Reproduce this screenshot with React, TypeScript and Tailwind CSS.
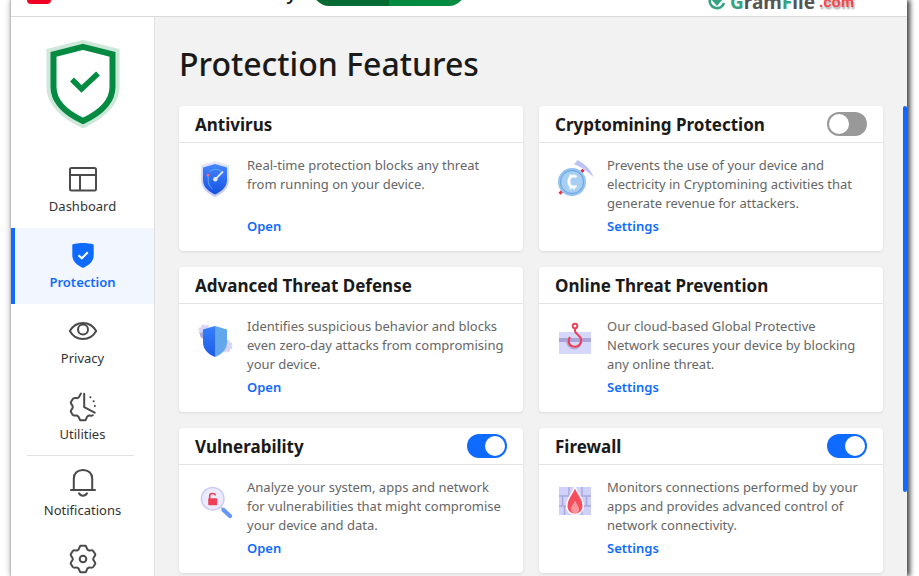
import { useState } from 'react';
import type { ReactNode } from 'react';
import clsx from 'clsx';

const navItems = [
  { id: 'dashboard', label: 'Dashboard', icon: <DashboardIcon /> },
  { id: 'protection', label: 'Protection', icon: <ProtectionIcon /> },
  { id: 'privacy', label: 'Privacy', icon: <PrivacyIcon /> },
  { id: 'utilities', label: 'Utilities', icon: <UtilitiesIcon /> },
  { id: 'notifications', label: 'Notifications', icon: <BellIcon />, divider: true },
  { id: 'settings', label: 'Settings', icon: <SettingsIcon /> },
];

type Feature = {
  id: string;
  title: string;
  description: string;
  action: string;
  icon: ReactNode;
  enabled?: boolean;
};

const features: Feature[] = [
  {
    id: 'antivirus',
    title: 'Antivirus',
    description: 'Real-time protection blocks any threat from running on your device.',
    action: 'Open',
    icon: <AntivirusArt />,
  },
  {
    id: 'cryptomining',
    title: 'Cryptomining Protection',
    description:
      'Prevents the use of your device and electricity in Cryptomining activities that generate revenue for attackers.',
    action: 'Settings',
    icon: <CryptoArt />,
    enabled: false,
  },
  {
    id: 'threat-defense',
    title: 'Advanced Threat Defense',
    description:
      'Identifies suspicious behavior and blocks even zero-day attacks from compromising your device.',
    action: 'Open',
    icon: <DefenseArt />,
  },
  {
    id: 'online-threat',
    title: 'Online Threat Prevention',
    description:
      'Our cloud-based Global Protective Network secures your device by blocking any online threat.',
    action: 'Settings',
    icon: <HookArt />,
  },
  {
    id: 'vulnerability',
    title: 'Vulnerability',
    description:
      'Analyze your system, apps and network for vulnerabilities that might compromise your device and data.',
    action: 'Open',
    icon: <VulnerabilityArt />,
    enabled: true,
  },
  {
    id: 'firewall',
    title: 'Firewall',
    description:
      'Monitors connections performed by your apps and provides advanced control of network connectivity.',
    action: 'Settings',
    icon: <FirewallArt />,
    enabled: true,
  },
];

export default function App() {
  const [active, setActive] = useState('protection');

  return (
    <div className="h-screen overflow-hidden bg-white pl-2.5 pr-3 font-['Noto_Sans','Open_Sans',sans-serif] text-[#1a1a1a]">
      <div className="flex h-full flex-col border-l border-[#bfbfbf] bg-white shadow-[3px_0_5px_rgba(0,0,0,0.7),0_0_7px_rgba(0,0,0,0.2)]">
        <Header />

        <div className="flex min-h-0 flex-1">
          {/* Sidebar */}
          <aside className="w-36 shrink-0 overflow-hidden border-r border-[#e0e0e0] bg-white">
            <div className="flex justify-center pt-[23px] pb-6">
              <StatusShield />
            </div>
            <nav>
              {navItems.map((item) => (
                <div key={item.id}>
                  {item.divider && <hr className="-mt-px mr-5 ml-4 border-[#e0e0e0]" />}
                  <button
                    type="button"
                    onClick={() => setActive(item.id)}
                    className={clsx(
                      'flex w-full flex-col items-center border-l-4 pt-3 pr-1 pb-3 text-[13px] leading-5',
                      active === item.id
                        ? 'border-[#0f6bff] bg-[#f2f7ff] font-semibold text-[#0f6bff]'
                        : 'border-transparent text-[#333]'
                    )}
                  >
                    {item.icon}
                    <span className="mt-0.5">{item.label}</span>
                  </button>
                </div>
              ))}
            </nav>
          </aside>

          {/* Main content */}
          <main className="min-w-0 flex-1 overflow-hidden bg-[#f2f2f2] pt-[23px] pl-6">
            <h1 className="mb-[18px] text-[32px] leading-12 font-medium">Protection Features</h1>
            <div className="flex items-start">
              <div className="grid flex-1 grid-cols-2 gap-4 pr-5">
                {features.map((feature) => (
                  <FeatureCard key={feature.id} feature={feature} />
                ))}
              </div>
              <div className="h-[67vh] w-1 rounded-full bg-[#0f6bff]" />
            </div>
          </main>
        </div>
      </div>
    </div>
  );
}

function Header() {
  return (
    <header className="flex h-[17px] shrink-0 items-end overflow-hidden border-b border-[#d9d9d9] pr-[53px] pl-4">
      <div className="mb-3 h-6 w-6 shrink-0 rounded bg-[#f00022]" />
      <span className="mb-2.5 ml-2 flex w-[254px] shrink-0 justify-end pr-4 text-xl leading-7 font-medium whitespace-nowrap">
        Bitdefender Total Security
      </span>
      <div className="mb-2.5 flex h-8 w-[152px] shrink-0 overflow-hidden rounded-full">
        <div className="flex-1 bg-[#056b32]" />
        <div className="flex-1 bg-[#058a42]" />
      </div>
      <div className="ml-auto flex shrink-0 items-end">
        <svg className="mr-1 mb-1.5 h-[18px] w-[18px]" viewBox="0 0 18 18" fill="none">
          <path d="M11 1.8A7.3 7.3 0 1 0 16 11" stroke="#36a283" strokeWidth="2.6" />
          <path d="M9 14L3.8 8h3V3h4.4v5h3z" fill="#36a283" />
        </svg>
        <span className="mb-1 text-[19px] leading-5 font-bold text-[#555]">
          <span className="text-[#36a283]">G</span>ram<span className="text-[#36a283]">F</span>ile
        </span>
        <span className="mb-1 ml-1 font-['Liberation_Sans',sans-serif] text-[15px] leading-5 font-bold text-[#f5474c] [text-shadow:1px_2px_2px_#999]">
          .com
        </span>
      </div>
    </header>
  );
}

function FeatureCard({ feature }: { feature: Feature }) {
  const [enabled, setEnabled] = useState(feature.enabled ?? false);

  return (
    <section className="rounded bg-white shadow-[0_1px_3px_rgba(0,0,0,0.1)]">
      <div className="flex h-[37px] items-center justify-between border-b border-[#e3e3e3] px-4">
        <h2 id={feature.id} className="pt-0.5 text-[17px] leading-6 font-bold">
          {feature.title}
        </h2>
        {feature.enabled !== undefined && (
          <input
            type="checkbox"
            role="switch"
            aria-labelledby={feature.id}
            checked={enabled}
            onChange={(e) => setEnabled(e.target.checked)}
            className="h-6 w-10 cursor-pointer appearance-none rounded-full bg-[#999] p-0.5 before:block before:h-5 before:w-5 before:rounded-full before:bg-white checked:bg-[#0f6bff] checked:before:ml-4"
          />
        )}
      </div>
      <div className="flex gap-3 px-4 pt-[13px] pb-[15px]">
        <div className="mt-1 h-10 w-10 shrink-0">{feature.icon}</div>
        <div className="flex flex-col items-start text-[13px] leading-[19px]">
          <p className="min-h-[57px] text-[#666]">{feature.description}</p>
          <a href={`#${feature.id}`} className="mt-1 font-semibold text-[#0f6bff]">
            {feature.action}
          </a>
        </div>
      </div>
    </section>
  );
}

/* Sidebar icons */

function StatusShield() {
  return (
    <svg className="h-[88px] w-[74px]" viewBox="0 0 74 88" fill="none">
      <path d="M37 0L73.500 9V47C73.500 65 58 78.500 37 88.500C16 78.500 0.500 65 0.500 47V9Z" fill="#cde8d9" />
      <path d="M37 6.800L66.500 14.300V47C66.500 61.500 54 73 37 81C20 73 7.500 61.500 7.500 47V14.300Z" fill="#fff" stroke="#058a42" strokeWidth="6" />
      <path d="M26 39.500L35.500 49L52 33.500" stroke="#058a42" strokeWidth="5.500" />
    </svg>
  );
}

function DashboardIcon() {
  return (
    <svg className="h-[30px] w-[30px]" viewBox="0 0 30 30" fill="none" stroke="#4a4a4a" strokeWidth="2">
      <rect x="2" y="4" width="26" height="22.500" rx="1.500" />
      <path d="M2 11H28M12 11V26.500" />
    </svg>
  );
}

function ProtectionIcon() {
  return (
    <svg className="h-[30px] w-[30px]" viewBox="0 0 30 30" fill="none">
      <path d="M15 3C18.500 3 22.500 3.500 25.700 4.500V15C25.700 21 21.500 25 15 28C8.500 25 4.300 21 4.300 15V4.500C7.500 3.500 11.500 3 15 3Z" fill="#0f6bff" />
      <path d="M10.500 15.200L13.800 18.300L19.800 12.300" stroke="#fff" strokeWidth="2" />
    </svg>
  );
}

function PrivacyIcon() {
  return (
    <svg className="h-[30px] w-[30px]" viewBox="0 0 30 30" fill="none" stroke="#4a4a4a" strokeWidth="2">
      <path d="M1.800 14.900C5 9.500 9.500 6.900 15 6.900S25 9.500 28.200 14.900C25 20.500 20.500 23 15 23S5 20.500 1.800 14.900Z" strokeLinejoin="round" />
      <circle cx="15" cy="13.500" r="5" />
    </svg>
  );
}

function UtilitiesIcon() {
  return (
    <svg className="h-[30px] w-[30px]" viewBox="0 0 30 30" fill="none" stroke="#4a4a4a" strokeWidth="2" strokeLinejoin="round" strokeLinecap="round">
      <path d="M13 1.500C11.600 2.500 12 5.800 9.300 6.200C6.500 6 5.500 5.500 4.800 7L2.800 10.300C2.500 12 4.800 13 4.800 15S2.500 18 2.800 19.700L4.800 23C5.800 24.300 7.500 23 9.500 23.800C11.500 25 11 26.500 12.200 28.200H17.500C18.800 26.500 18 25 20.200 23.800C22 23.200 23.500 24.200 24.800 23.200" />
      <path d="M16.200 1.700V15.200L26.700 20.700" />
      <path d="M22.300 5.200H22.400M25.600 9.200H25.700M26.800 14.100H26.900" />
    </svg>
  );
}

function BellIcon() {
  return (
    <svg className="h-[30px] w-[30px]" viewBox="0 0 30 30" fill="none" stroke="#4a4a4a" strokeWidth="2" strokeLinecap="round">
      <path d="M3 22H27M5.800 21.500V10.500C5.800 5.500 9.500 1.900 15 1.900S24.200 5.500 24.200 10.500V21.500" />
      <path d="M11 25.300C12.500 28.400 17.500 28.400 19 25.300" />
    </svg>
  );
}

function SettingsIcon() {
  return (
    <svg className="h-[30px] w-[30px]" viewBox="0 0 30 30" fill="none" stroke="#4a4a4a" strokeWidth="2" strokeLinejoin="round">
      <path d="M12.300 1.800H17.700C19 3.500 18.500 5.500 20.500 6.200C22.500 7 24 5.500 25.200 7L27.300 10.300C27.600 12 25.200 13 25.200 15S27.600 18 27.300 19.700L25.200 23C24 24.500 22.500 23 20.500 23.800C18.500 24.500 19 26.500 17.700 28.200H12.300C11 26.500 11.500 24.500 9.500 23.800C7.500 23 6 24.500 4.800 23L2.700 19.700C2.400 18 4.800 17 4.800 15S2.400 12 2.700 10.300L4.800 7C6 5.500 7.500 7 9.500 6.200C11.500 5.500 11 3.500 12.300 1.800Z" />
      <circle cx="15" cy="15" r="3.300" />
    </svg>
  );
}

/* Feature illustrations */

function AntivirusArt() {
  return (
    <svg viewBox="0 0 40 40" fill="none">
      <defs>
        <linearGradient id="avOuter" x1="20" y1="1" x2="20" y2="37" gradientUnits="userSpaceOnUse">
          <stop stopColor="#e6e8fd" />
          <stop offset="1" stopColor="#c5c8f5" />
        </linearGradient>
        <linearGradient id="avInner" x1="20" y1="4" x2="20" y2="35" gradientUnits="userSpaceOnUse">
          <stop stopColor="#4586ff" />
          <stop offset="1" stopColor="#1450e0" />
        </linearGradient>
      </defs>
      <path d="M20 1L34 5V20C34 28 28.500 33 20 37C11.500 33 6 28 6 20V5Z" fill="url(#avOuter)" />
      <path d="M20 4L32 7.500V20C32 27 27 31 20 34.500C13 31 8 27 8 20V7.500Z" fill="url(#avInner)" />
      <path d="M17.500 29C14.500 26.500 13.200 24 13.200 20V15M14 12C17 9 22 8.500 26 11" stroke="#5fa8ee" strokeWidth="1" />
      <path d="M20.300 19.300L27.500 12" stroke="#dfe6ff" strokeWidth="1.800" strokeLinecap="round" />
      <circle cx="20.300" cy="19.300" r="2.200" fill="#e4e9ff" />
      <circle cx="13" cy="15" r="1.500" fill="#ff6b75" />
    </svg>
  );
}

function CryptoArt() {
  return (
    <svg viewBox="0 0 40 40" fill="none">
      <path d="M4.500 33.800L28.500 9.800" stroke="#e8344c" strokeWidth="3" />
      <path d="M22.500 0L19 4.500C26 6.500 32 11 38.500 17C36 9.500 30 4 22.500 0Z" fill="#bdc3f3" />
      <path d="M27.700 9.200L29.200 10.700L27.700 12.200L26.200 10.700Z" fill="#e02040" />
      <circle cx="17" cy="22" r="14" fill="#95c3ef" />
      <circle cx="17" cy="22" r="11.500" fill="#a5d0f4" stroke="#659fe0" />
      <path d="M15.500 14.500V17M19 14.500V17M15.500 27V29.500M19 27V29.500" stroke="#fff" strokeWidth="1.800" />
      <text x="17" y="28" textAnchor="middle" fontSize="17" fontWeight="700" fill="#fff">C</text>
    </svg>
  );
}

function DefenseArt() {
  return (
    <svg viewBox="0 0 40 40" fill="none">
      <defs>
        <linearGradient id="atdLeft" x1="14" y1="5" x2="14" y2="36" gradientUnits="userSpaceOnUse">
          <stop stopColor="#3480fa" />
          <stop offset="1" stopColor="#1d5ce8" />
        </linearGradient>
      </defs>
      <circle cx="10" cy="10" r="5.500" fill="#d6d5f8" stroke="#d6d5f8" strokeWidth="2" strokeDasharray="3 1.300" />
      <circle cx="31" cy="25" r="5.500" fill="#d6d5f8" stroke="#d6d5f8" strokeWidth="2" strokeDasharray="3 1.300" />
      <path d="M5 13.500C5 12 6.500 11 8 11V17.500C6 17 5 15.500 5 13.500Z" fill="#aaa8dc" />
      <path d="M20 5V36C12.500 33 8 28 8 21V8.500Z" fill="url(#atdLeft)" />
      <path d="M20 5V36C27.500 33 32 28 32 21V8.500Z" fill="#62a6eb" />
    </svg>
  );
}

function HookArt() {
  return (
    <svg viewBox="0 0 40 40" fill="none">
      <rect x="4" y="11" width="32" height="22" fill="#d5d7fb" />
      <rect x="4" y="17" width="32" height="4" fill="#aaa4dc" />
      <path d="M12 19C11.500 23.500 15 27.500 19 27.500S26.500 24.500 26.500 20" stroke="#b3aedf" strokeWidth="2" />
      <circle cx="20" cy="5" r="2.300" stroke="#ee4056" strokeWidth="1.900" />
      <path d="M20 7.500V10C20 13 26.200 14.500 26.200 19.200A6.200 6.200 0 0 1 20 25.700C14 25.700 12 20.500 15 16" stroke="#ee4056" strokeWidth="2.100" />
    </svg>
  );
}

function VulnerabilityArt() {
  return (
    <svg viewBox="0 0 40 40" fill="none">
      <path d="M26 25L29 28" stroke="#bfc2f3" strokeWidth="2" />
      <path d="M28.500 28L35 34" stroke="#6796fb" strokeWidth="4.200" strokeLinecap="round" />
      <circle cx="17.700" cy="16.700" r="11.300" fill="#ecebfd" stroke="#cccbf6" strokeWidth="1.500" />
      <path d="M14.700 17V13.800C14.700 10.800 20 10.600 20.300 13.500" stroke="#ee4056" strokeWidth="1.600" />
      <rect x="13.200" y="16.200" width="9" height="7" rx="1" fill="#ee4056" />
    </svg>
  );
}

function FirewallArt() {
  return (
    <svg viewBox="0 0 40 40" fill="none">
      <rect x="4" y="5" width="32" height="28" fill="#d0d1f9" />
      <path d="M4 14H36M4 24H36M14 5V14M27 5V14M7.500 14V24M31.500 14V24M9.500 24V33M27 24V33" stroke="#aaa7df" strokeWidth="1.500" />
      <path d="M20 6.500C22 12 27.500 17 27.500 24C27.500 28.500 24.500 31.500 20 31.500S12.500 28.500 12.500 24C12.500 17 18 12 20 6.500Z" fill="#f74e5e" stroke="#fff" strokeWidth="3" paintOrder="stroke" />
      <path d="M20 18.500C21 21.500 24 24 24 27.500C24 30 22.500 31.200 20 31.200S16 30 16 27.500C16 24 19 21.500 20 18.500Z" fill="#ff949b" />
    </svg>
  );
}
